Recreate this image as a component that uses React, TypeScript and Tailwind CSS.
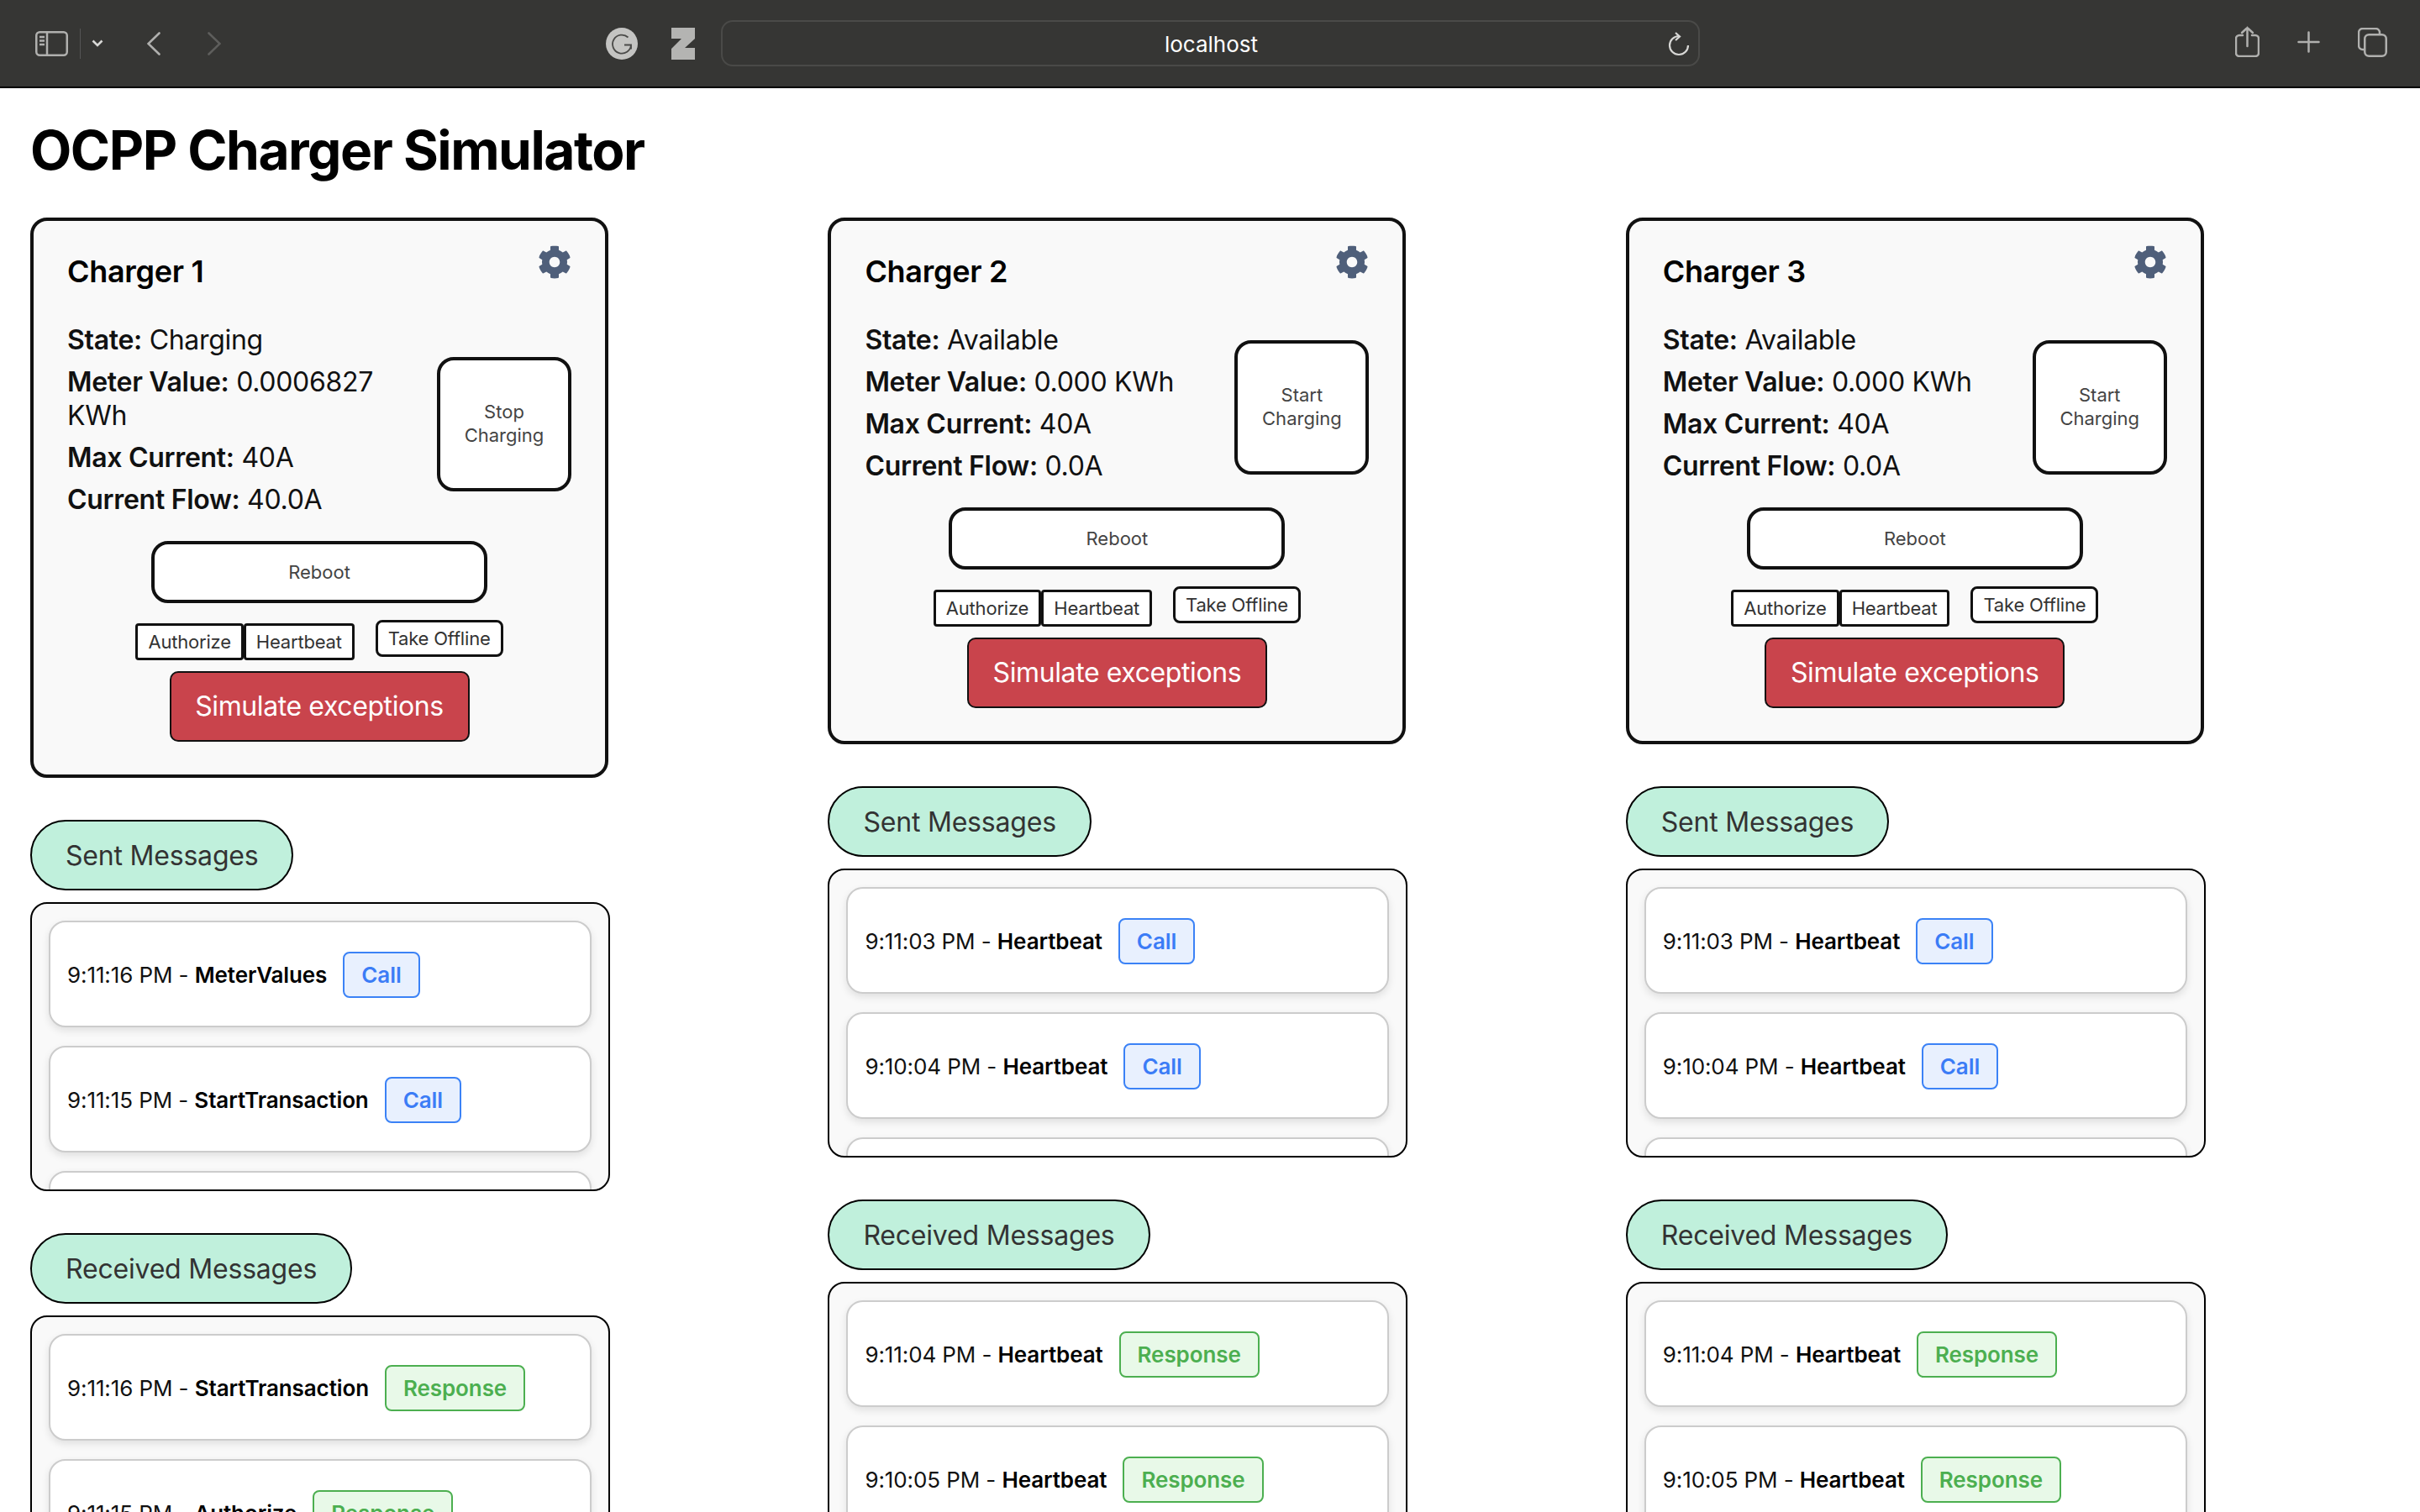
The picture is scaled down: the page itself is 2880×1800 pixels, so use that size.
import { FaCog } from "react-icons/fa";

const font = "font-['Inter',sans-serif]";

type Msg = { time: string; name: string; kind: "Call" | "Response" };

type Charger = {
  name: string;
  state: string;
  meter: string;
  flow: string;
  action: string[];
  sent: Msg[];
  received: Msg[];
};

const chargers: Charger[] = [
  {
    name: "Charger 1",
    state: "Charging",
    meter: "0.0006827 KWh",
    flow: "40.0A",
    action: ["Stop", "Charging"],
    sent: [
      { time: "9:11:16 PM", name: "MeterValues", kind: "Call" },
      { time: "9:11:15 PM", name: "StartTransaction", kind: "Call" },
      { time: "9:11:15 PM", name: "Authorize", kind: "Call" },
    ],
    received: [
      { time: "9:11:16 PM", name: "StartTransaction", kind: "Response" },
      { time: "9:11:15 PM", name: "Authorize", kind: "Response" },
    ],
  },
  {
    name: "Charger 2",
    state: "Available",
    meter: "0.000 KWh",
    flow: "0.0A",
    action: ["Start", "Charging"],
    sent: [
      { time: "9:11:03 PM", name: "Heartbeat", kind: "Call" },
      { time: "9:10:04 PM", name: "Heartbeat", kind: "Call" },
      { time: "9:09:04 PM", name: "Heartbeat", kind: "Call" },
    ],
    received: [
      { time: "9:11:04 PM", name: "Heartbeat", kind: "Response" },
      { time: "9:10:05 PM", name: "Heartbeat", kind: "Response" },
    ],
  },
  {
    name: "Charger 3",
    state: "Available",
    meter: "0.000 KWh",
    flow: "0.0A",
    action: ["Start", "Charging"],
    sent: [
      { time: "9:11:03 PM", name: "Heartbeat", kind: "Call" },
      { time: "9:10:04 PM", name: "Heartbeat", kind: "Call" },
      { time: "9:09:04 PM", name: "Heartbeat", kind: "Call" },
    ],
    received: [
      { time: "9:11:04 PM", name: "Heartbeat", kind: "Response" },
      { time: "9:10:05 PM", name: "Heartbeat", kind: "Response" },
    ],
  },
];

function Toolbar() {
  return (
    <div className="flex h-[105px] items-center border-b-2 border-black bg-[#363634] text-[#b0b0ae]">
      <svg width="39" height="30" viewBox="0 0 39 30" fill="none" stroke="currentColor" strokeWidth="2.5" className="ml-[42px]">
        <rect x="1.25" y="1.25" width="36.5" height="27.5" rx="4" />
        <path d="M14 1v28M5 7h6M5 11.5h6M5 16h6" />
      </svg>
      <div className="ml-[14px] h-[36px] w-px bg-[#555]" />
      <svg width="14" height="9" viewBox="0 0 14 9" fill="none" stroke="#d8d8d6" strokeWidth="2.6" className="ml-[13px]">
        <path d="M1.5 1.5L7 7l5.5-5.5" />
      </svg>
      <svg width="16" height="28" viewBox="0 0 16 28" fill="none" stroke="currentColor" strokeWidth="2.6" strokeLinecap="round" className="ml-[52px]">
        <path d="M14.5 1.5L1.5 14l13 12.5" />
      </svg>
      <svg width="16" height="28" viewBox="0 0 16 28" fill="none" stroke="#5e5e5c" strokeWidth="2.6" strokeLinecap="round" className="ml-[56px]">
        <path d="M1.5 1.5L14.5 14 1.5 26.5" />
      </svg>
      <svg width="38" height="38" viewBox="0 0 38 38" fill="none" className="ml-[458px]">
        <circle cx="19" cy="19" r="19" fill="#c4c4c2" />
        <path d="M26.5 11.5a11 11 0 1 0 3.5 9h-8M30 20.5v5" stroke="#4a4a48" strokeWidth="1.8" />
      </svg>
      <svg width="28" height="38" viewBox="0 0 28 38" fill="#b4b4b2" className="ml-[40px]">
        <path d="M0 0h28v13L16 24h12v14H0V25L12 13H0z" />
      </svg>
      <div className="relative ml-[31px] flex h-[55px] w-[1165px] items-center justify-center rounded-[14px] border-2 border-[#4a4a48]">
        <span className={`${font} ml-[2px] mt-[2px] text-[26px] text-white`}>localhost</span>
        <svg width="26" height="30" viewBox="0 0 26 30" fill="none" stroke="#d8d8d6" strokeWidth="2.2" className="absolute right-[10px] top-[12px]">
          <path d="M24 16a11 11 0 1 1-11-11" />
          <path d="M9 1l5 4.5L9 10" />
        </svg>
      </div>
      <svg width="29" height="37" viewBox="0 0 29 37" fill="none" stroke="currentColor" strokeWidth="2.5" strokeLinecap="round" className="-mt-[4px] ml-[637px]">
        <path d="M9 11H5a4 4 0 0 0-4 4v17a4 4 0 0 0 4 4h19a4 4 0 0 0 4-4V15a4 4 0 0 0-4-4h-4" />
        <path d="M14.5 24V2M8 8l6.5-6L21 8" />
      </svg>
      <svg width="27" height="26" viewBox="0 0 27 26" fill="none" stroke="currentColor" strokeWidth="2.5" strokeLinecap="round" className="-mt-[3px] ml-[45px]">
        <path d="M13.5 1.5v23M1.5 13h24" />
      </svg>
      <svg width="35" height="35" viewBox="0 0 35 35" fill="none" stroke="currentColor" strokeWidth="2.5" className="-mt-[2px] ml-[45px]">
        <path d="M8 26H6a5 5 0 0 1-5-5V6a5 5 0 0 1 5-5h15a5 5 0 0 1 5 5v2" />
        <rect x="8.25" y="8.25" width="25.5" height="25.5" rx="5" />
      </svg>
    </div>
  );
}

function MessageList({ title, items }: { title: string; items: Msg[] }) {
  return (
    <div>
      <div className="inline-block rounded-[42px] border-2 border-black bg-[#c0f0dc] px-[40px] pt-[21px] pb-[19px] text-[32px] leading-[40px] tracking-[-0.2px] text-[#333]">
        {title}
      </div>
      <div className="mt-[14px] flex h-[344px] flex-col gap-[22px] overflow-hidden rounded-[20px] border-2 border-black bg-[#f9f9f9] px-[20px] pt-[20px]">
        {items.map((m, i) => (
          <div
            key={i}
            className="flex h-[127px] shrink-0 items-center rounded-[20px] border-2 border-[#ccc] bg-white px-[20px] pt-[1px] text-[26px] tracking-[-0.1px] text-[#111] shadow-[0_4px_10px_rgba(0,0,0,0.1)]"
          >
            <span>
              {m.time} - <span className="font-semibold text-black">{m.name}</span>
            </span>
            <span
              className={
                m.kind === "Call"
                  ? "ml-[19px] flex h-[55px] items-center rounded-[8px] border-2 border-[#3b82f6] bg-[#e8f0fe] px-[20px] font-semibold text-[#3b7cf6]"
                  : "ml-[19px] flex h-[55px] items-center rounded-[8px] border-2 border-[#4caf50] bg-[#e8f9e8] px-[20px] font-semibold text-[#4caf50]"
              }
            >
              {m.kind}
            </span>
          </div>
        ))}
      </div>
    </div>
  );
}

function ChargerColumn({ c }: { c: Charger }) {
  return (
    <div className="flex w-[690px] flex-col gap-[50px]">
      <div className="relative w-[688px] rounded-[20px] border-4 border-[#111] bg-[#f9f9f9] px-[40px] pt-[36px] pb-[39px]">
        <FaCog className="absolute right-[40px] top-[29px] h-[40px] w-[40px] text-[#4f5f7a]" />
        <h2 className="text-[36px] font-semibold leading-[48px] tracking-[-0.3px] text-black">{c.name}</h2>
        <div className="mt-[38px] flex items-center justify-between">
          <div className="w-[400px] text-[32px] leading-[40px] tracking-[-0.3px] text-[#111]">
            <p><b className="font-semibold">State:</b> {c.state}</p>
            <p className="mt-[10px]"><b className="font-semibold">Meter Value:</b> {c.meter}</p>
            <p className="mt-[10px]"><b className="font-semibold">Max Current:</b> 40A</p>
            <p className="mt-[10px]"><b className="font-semibold">Current Flow:</b> {c.flow}</p>
          </div>
          <button className="mt-[9px] h-[160px] w-[160px] rounded-[20px] border-4 border-[#111] bg-white pb-[2px] text-[22px] leading-[28px] text-[#444]">
            {c.action[0]}<br />{c.action[1]}
          </button>
        </div>
        <div className="mt-[29px] flex justify-center">
          <button className="h-[74px] w-[400px] rounded-[20px] border-4 border-[#111] bg-white text-[22px] text-[#444]">Reboot</button>
        </div>
        <div className="mt-[20px] flex items-start justify-center">
          <button className="mt-[4px] h-[44px] rounded-[4px] border-[3px] border-[#111] bg-white px-[12px] text-[22px] tracking-[-0.2px] text-[#333]">Authorize</button>
          <button className="mt-[4px] h-[44px] rounded-[4px] border-[3px] border-[#111] bg-white px-[12px] text-[22px] tracking-[-0.2px] text-[#333]">Heartbeat</button>
          <button className="ml-[25px] h-[44px] rounded-[8px] border-[3px] border-[#111] bg-white px-[12px] text-[22px] tracking-[-0.2px] text-[#333]">Take Offline</button>
        </div>
        <div className="mt-[13px] flex justify-center">
          <button className="h-[84px] w-[357px] rounded-[10px] border-2 border-[#111] bg-[#c9444c] text-[32px] tracking-[-0.4px] text-white">Simulate exceptions</button>
        </div>
      </div>
      <div className="flex flex-col gap-[50px]">
        <MessageList title="Sent Messages" items={c.sent} />
        <MessageList title="Received Messages" items={c.received} />
      </div>
    </div>
  );
}

export default function App() {
  return (
    <div className={`${font} h-[1800px] overflow-hidden bg-white`}>
      <Toolbar />
      <div className="px-[36px]">
        <h1 className="mt-[35px] text-[64px] font-bold leading-[78px] tracking-[-1.5px] text-black">OCPP Charger Simulator</h1>
        <div className="mt-[41px] flex items-start gap-[259.4px]">
          {chargers.map((c) => (
            <ChargerColumn key={c.name} c={c} />
          ))}
        </div>
      </div>
    </div>
  );
}
